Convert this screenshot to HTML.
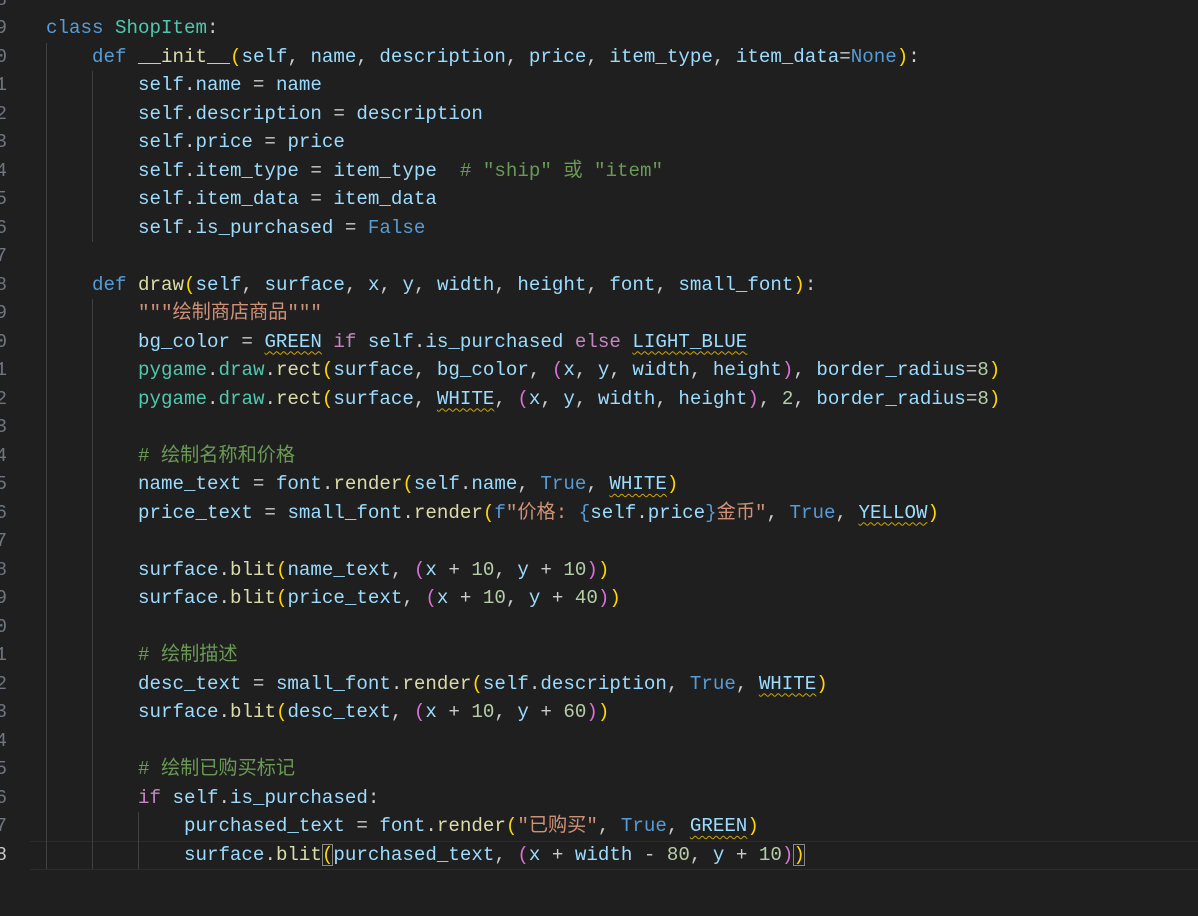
<!DOCTYPE html>
<html><head><meta charset="utf-8"><style>
html,body{margin:0;padding:0;background:#1f1f1f;width:1198px;height:916px;overflow:hidden;position:relative}
.code{position:absolute;left:46px;top:-14.5px;font-family:"Liberation Mono","Noto Sans CJK SC",monospace;font-size:19.17px;line-height:28.5px;color:#cccccc;white-space:normal}
.code div{height:28.5px;white-space:pre}
.ln{position:absolute;left:-40px;width:47px;top:-14.5px;text-align:right;font-family:"Liberation Mono",monospace;font-size:19.17px;line-height:28.5px;color:#6e7681}
.ln div{height:28.5px}
.k{color:#569cd6}.c{color:#c586c0}.v{color:#9cdcfe}.f{color:#dcdcaa}.t{color:#4ec9b0}.s{color:#ce9178}.m{color:#6a9955}.n{color:#b5cea8}
.p1{color:#ffd700}.p2{color:#da70d6}.p3{color:#179fff}
.w{color:#9cdcfe;text-decoration:underline wavy #cca700;text-decoration-thickness:1px;text-underline-offset:4px}
.g{position:absolute;width:1px;background:#404040}
.cur{position:absolute;left:30px;right:0;top:841px;height:27px;border-top:1px solid #2c2c2c;border-bottom:1px solid #2c2c2c}
.bm{outline:1px solid #888;outline-offset:-1px}
</style></head><body>
<div class="cur"></div>
<div class="g" style="left:46px;top:43px;height:826px"></div>
<div class="g" style="left:92px;top:71px;height:171px"></div>
<div class="g" style="left:92px;top:299px;height:570px"></div>
<div class="g" style="left:138px;top:812px;height:57px"></div>
<div class="ln"><div>8</div><div>9</div><div>0</div><div>1</div><div>2</div><div>3</div><div>4</div><div>5</div><div>6</div><div>7</div><div>8</div><div>9</div><div>0</div><div>1</div><div>2</div><div>3</div><div>4</div><div>5</div><div>6</div><div>7</div><div>8</div><div>9</div><div>0</div><div>1</div><div>2</div><div>3</div><div>4</div><div>5</div><div>6</div><div>7</div><div style="color:#cccccc">8</div></div>
<div class="code">
<div> </div>
<div><span class="k">class</span> <span class="t">ShopItem</span>:</div>
<div>    <span class="k">def</span> <span class="f">__init__</span><span class="p1">(</span><span class="v">self</span>, <span class="v">name</span>, <span class="v">description</span>, <span class="v">price</span>, <span class="v">item_type</span>, <span class="v">item_data</span>=<span class="k">None</span><span class="p1">)</span>:</div>
<div>        <span class="v">self</span>.<span class="v">name</span> = <span class="v">name</span></div>
<div>        <span class="v">self</span>.<span class="v">description</span> = <span class="v">description</span></div>
<div>        <span class="v">self</span>.<span class="v">price</span> = <span class="v">price</span></div>
<div>        <span class="v">self</span>.<span class="v">item_type</span> = <span class="v">item_type</span>  <span class="m"># "ship" 或 "item"</span></div>
<div>        <span class="v">self</span>.<span class="v">item_data</span> = <span class="v">item_data</span></div>
<div>        <span class="v">self</span>.<span class="v">is_purchased</span> = <span class="k">False</span></div>
<div> </div>
<div>    <span class="k">def</span> <span class="f">draw</span><span class="p1">(</span><span class="v">self</span>, <span class="v">surface</span>, <span class="v">x</span>, <span class="v">y</span>, <span class="v">width</span>, <span class="v">height</span>, <span class="v">font</span>, <span class="v">small_font</span><span class="p1">)</span>:</div>
<div>        <span class="s">"""绘制商店商品"""</span></div>
<div>        <span class="v">bg_color</span> = <span class="w">GREEN</span> <span class="c">if</span> <span class="v">self</span>.<span class="v">is_purchased</span> <span class="c">else</span> <span class="w">LIGHT_BLUE</span></div>
<div>        <span class="t">pygame</span>.<span class="t">draw</span>.<span class="f">rect</span><span class="p1">(</span><span class="v">surface</span>, <span class="v">bg_color</span>, <span class="p2">(</span><span class="v">x</span>, <span class="v">y</span>, <span class="v">width</span>, <span class="v">height</span><span class="p2">)</span>, <span class="v">border_radius</span>=<span class="n">8</span><span class="p1">)</span></div>
<div>        <span class="t">pygame</span>.<span class="t">draw</span>.<span class="f">rect</span><span class="p1">(</span><span class="v">surface</span>, <span class="w">WHITE</span>, <span class="p2">(</span><span class="v">x</span>, <span class="v">y</span>, <span class="v">width</span>, <span class="v">height</span><span class="p2">)</span>, <span class="n">2</span>, <span class="v">border_radius</span>=<span class="n">8</span><span class="p1">)</span></div>
<div> </div>
<div>        <span class="m"># 绘制名称和价格</span></div>
<div>        <span class="v">name_text</span> = <span class="v">font</span>.<span class="f">render</span><span class="p1">(</span><span class="v">self</span>.<span class="v">name</span>, <span class="k">True</span>, <span class="w">WHITE</span><span class="p1">)</span></div>
<div>        <span class="v">price_text</span> = <span class="v">small_font</span>.<span class="f">render</span><span class="p1">(</span><span class="k">f</span><span class="s">"价格: </span><span class="k">{</span><span class="v">self</span>.<span class="v">price</span><span class="k">}</span><span class="s">金币"</span>, <span class="k">True</span>, <span class="w">YELLOW</span><span class="p1">)</span></div>
<div> </div>
<div>        <span class="v">surface</span>.<span class="f">blit</span><span class="p1">(</span><span class="v">name_text</span>, <span class="p2">(</span><span class="v">x</span> + <span class="n">10</span>, <span class="v">y</span> + <span class="n">10</span><span class="p2">)</span><span class="p1">)</span></div>
<div>        <span class="v">surface</span>.<span class="f">blit</span><span class="p1">(</span><span class="v">price_text</span>, <span class="p2">(</span><span class="v">x</span> + <span class="n">10</span>, <span class="v">y</span> + <span class="n">40</span><span class="p2">)</span><span class="p1">)</span></div>
<div> </div>
<div>        <span class="m"># 绘制描述</span></div>
<div>        <span class="v">desc_text</span> = <span class="v">small_font</span>.<span class="f">render</span><span class="p1">(</span><span class="v">self</span>.<span class="v">description</span>, <span class="k">True</span>, <span class="w">WHITE</span><span class="p1">)</span></div>
<div>        <span class="v">surface</span>.<span class="f">blit</span><span class="p1">(</span><span class="v">desc_text</span>, <span class="p2">(</span><span class="v">x</span> + <span class="n">10</span>, <span class="v">y</span> + <span class="n">60</span><span class="p2">)</span><span class="p1">)</span></div>
<div> </div>
<div>        <span class="m"># 绘制已购买标记</span></div>
<div>        <span class="c">if</span> <span class="v">self</span>.<span class="v">is_purchased</span>:</div>
<div>            <span class="v">purchased_text</span> = <span class="v">font</span>.<span class="f">render</span><span class="p1">(</span><span class="s">"已购买"</span>, <span class="k">True</span>, <span class="w">GREEN</span><span class="p1">)</span></div>
<div>            <span class="v">surface</span>.<span class="f">blit</span><span class="p1 bm">(</span><span class="v">purchased_text</span>, <span class="p2">(</span><span class="v">x</span> + <span class="v">width</span> - <span class="n">80</span>, <span class="v">y</span> + <span class="n">10</span><span class="p2">)</span><span class="p1 bm">)</span></div>
</div>
</body></html>
